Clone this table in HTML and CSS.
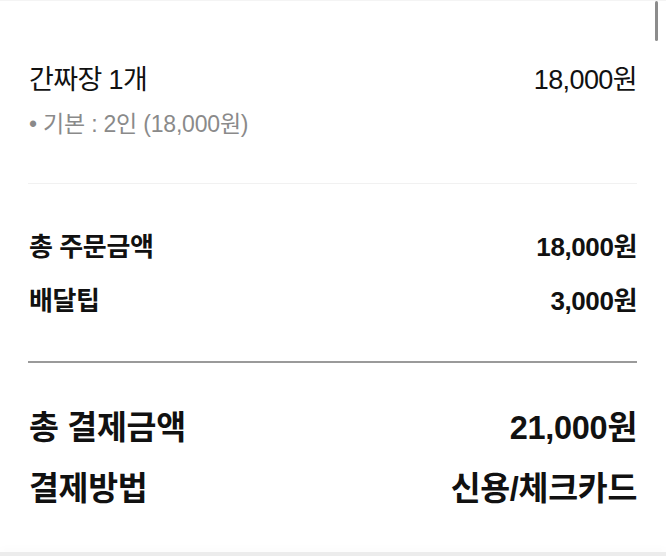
FILE: index.html
```html
<!DOCTYPE html>
<html lang="ko">
<head>
<meta charset="utf-8">
<link rel="stylesheet" href="styles.css">
</head>
<body>
<div class="page">
  <section class="menu">
    <div class="row main">
      <span class="label">간짜장 1개</span>
      <span class="value">18,000원</span>
    </div>
    <div class="option">• 기본 : 2인 (18,000원)</div>
  </section>
  <hr class="divider light">
  <section class="sums">
    <div class="row bold">
      <span class="label">총 주문금액</span>
      <span class="value">18,000원</span>
    </div>
    <div class="row bold">
      <span class="label">배달팁</span>
      <span class="value">3,000원</span>
    </div>
  </section>
  <hr class="divider dark">
  <section class="total">
    <div class="row big">
      <span class="label">총 결제금액</span>
      <span class="value">21,000원</span>
    </div>
    <div class="row big">
      <span class="label">결제방법</span>
      <span class="value">신용/체크카드</span>
    </div>
  </section>
  <div class="footer-band"></div>
</div>
<div class="scrollbar"></div>
</body>
</html>
```
FILE: styles.css
```css
html, body {
  margin: 0;
  padding: 0;
  background: #ffffff;
}
body {
  font-family: "Liberation Sans", "Noto Sans CJK KR", sans-serif;
  color: #111111;
  height: 556px;
  overflow: hidden;
  position: relative;
  border-top: 1px solid #f4f4f4;
  box-sizing: border-box;
}
.page {
  display: flex;
  flex-direction: column;
  height: 100%;
}
.menu {
  padding: 63px 29px 0 29px;
}
.row {
  display: flex;
  justify-content: space-between;
  align-items: center;
}
.main {
  font-size: 27px;
  line-height: 32px;
  letter-spacing: -0.6px;
}
.option {
  margin-top: 14px;
  font-size: 23px;
  line-height: 28px;
  color: #8a8a8a;
  letter-spacing: -0.2px;
}
.divider {
  border: 0;
  margin: 0 29px 0 28px;
}
.divider.light {
  margin-top: 45px;
  height: 1px;
  background: #f1f1f1;
}
.divider.dark {
  margin-top: 44px;
  height: 2px;
  background: #9a9a9a;
}
.sums {
  padding: 47px 29px 0 29px;
  display: flex;
  flex-direction: column;
  gap: 22px;
}
.bold {
  font-size: 26px;
  line-height: 32px;
  font-weight: 700;
  letter-spacing: -0.4px;
}
.total {
  padding: 45px 29px 0 29px;
  display: flex;
  flex-direction: column;
  gap: 21px;
}
.big {
  font-size: 32.5px;
  line-height: 40px;
  font-weight: 700;
  letter-spacing: -0.3px;
}
.footer-band {
  margin-top: auto;
  height: 4px;
  background: #ececec;
  box-shadow: 0 -4px 6px rgba(0,0,0,0.02);
}
.scrollbar {
  position: absolute;
  top: 0;
  right: 8px;
  width: 3px;
  height: 40px;
  border-radius: 2px;
  background: #8c8c8c;
}
```
